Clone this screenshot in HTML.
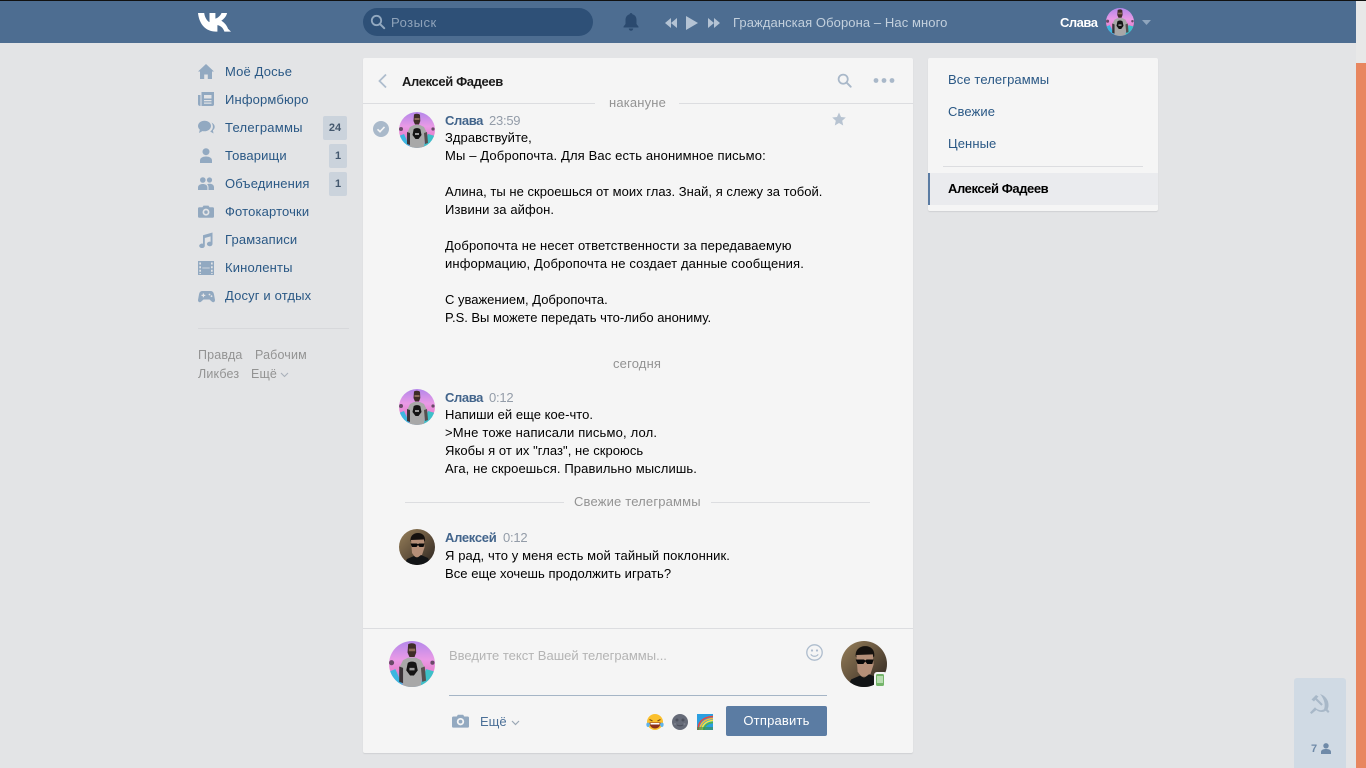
<!DOCTYPE html>
<html lang="ru"><head><meta charset="utf-8"><title>Телеграммы</title>
<style>
html,body{margin:0;padding:0;width:1366px;height:768px;overflow:hidden;background:#e3e4e6;}
body{font-family:"Liberation Sans",sans-serif;font-size:13px;position:relative;color:#000;}
.a{position:absolute;white-space:nowrap;}
.n{color:#2a5885;left:225px;letter-spacing:.15px;line-height:16px;}
.ic{position:absolute;left:198px;}
.b{position:absolute;background:#cbd3dc;border-radius:2px;color:#44586e;font-weight:bold;font-size:11px;text-align:center;height:24px;line-height:24px;}
.t{left:445px;line-height:18px;color:#000;letter-spacing:.05px;}
.nm{left:445px;font-weight:bold;color:#42648b;line-height:16px;letter-spacing:-.38px;}
.tm{color:#939ca8;line-height:16px;letter-spacing:-.25px;}
.g{color:#939393;line-height:16px;letter-spacing:.17px;}
.r{left:948px;color:#2a5885;line-height:16px;letter-spacing:.1px;}
svg{position:absolute;display:block;}
</style></head><body>
<svg width="0" height="0" style="position:absolute"><defs>
<clipPath id="c"><circle cx="18" cy="18" r="18"/></clipPath>
<linearGradient id="sky" x1="0" y1="0" x2="0" y2="1"><stop offset="0" stop-color="#b487ea"/><stop offset=".4" stop-color="#e99ae6"/><stop offset=".65" stop-color="#e884d0"/><stop offset="1" stop-color="#5a9fd8"/></linearGradient>
<linearGradient id="bg2" x1="0" y1="0" x2="1" y2="1"><stop offset="0" stop-color="#97805a"/><stop offset=".55" stop-color="#5f4e3a"/><stop offset="1" stop-color="#2a2420"/></linearGradient>
<symbol id="sl" viewBox="0 0 36 36"><g clip-path="url(#c)"><rect width="36" height="36" fill="url(#sky)"/><path d="M0 24l5-2 6 14H0z" fill="#3cb6e0"/><path d="M36 24l-7-2-5 14h12z" fill="#3cc0c8"/><circle cx="2" cy="17" r="2" fill="#6a4a68"/><circle cx="34" cy="17" r="1.600" fill="#6a4a68"/><path d="M11 15l4-2h6l4 2 3 6-2 2-1 13H11l-1-13-2-2z" fill="#a8a8a8"/><path d="M8 20l3 1v12l-3-1z" fill="#3a3438"/><path d="M25 21l3-1 1 11-3 1z" fill="#55504f"/><path d="M15 2.500c2-1 5-1 6 .5l.3 6-1.300 3.500h-4L14.500 9z" fill="#3e2c28"/><path d="M15.500 6h5v2h-5z" fill="#8a6a58"/><path d="M14.500 18c0-2.500 7-2.500 7 0l1 5-3 4h-3l-3-4z" fill="#141414"/><path d="M16 21h4v2h-4z" fill="#9a9a9a"/></g></symbol>
<symbol id="al" viewBox="0 0 36 36"><g clip-path="url(#c)"><rect width="36" height="36" fill="url(#bg2)"/><path d="M11.500 12c-.5-5 3-8 7.500-8s7.500 3 7 8l-1.500 1-12 .5z" fill="#15110e"/><path d="M12 11l13-.5.5 8-2.500 7.500-3 2h-4l-3-4z" fill="#b58f78"/><path d="M11.500 14.500h6.500l1 .8 1-.8h5.500l-1 3.500h-4l-1.500-2-1.500 2h-4.500z" fill="#080808"/><path d="M5 36l3-6 7-3 3 2 4-3 7 3 3 7z" fill="#121416"/></g></symbol>
<symbol id="cam" viewBox="0 0 18 14"><path d="M1.500 2.200H5L6.200.4h5.600L13 2.200h3.500A1.500 1.500 0 0 1 18 3.700v8.800a1.500 1.500 0 0 1-1.500 1.500h-15A1.500 1.500 0 0 1 0 12.500V3.700a1.500 1.500 0 0 1 1.500-1.500zM9 3.800a3.900 3.900 0 1 0 0 7.800 3.900 3.900 0 0 0 0-7.800zm0 1.900a2 2 0 1 1 0 4 2 2 0 0 1 0-4z" fill="#93a9c0" fill-rule="evenodd"/></symbol>
</defs></svg>

<!-- top bar -->
<div class="a" style="left:0;top:0;width:1366px;height:1px;background:#111;"></div>
<div class="a" style="left:0;top:1px;width:1356px;height:42px;background:#4d6d91;"></div>
<svg style="left:198px;top:12px" width="33" height="20" viewBox="0 0 33 20"><path d="M0 1h6.200c.4 3.600 2.600 8.200 5.300 9.100V1h5.900v5.600C19.400 6.300 22.300 4 23.500 1h5.600c-.9 3.700-3.700 6.300-5.800 7.800 2.300 1.300 5.300 3.900 6.700 8L33 19.600h-6.600c-1.100-3.500-3.700-6-7-6.500v6.500h-1.500C8 19.600 1.200 12.500 0 1z" fill="#fff"/></svg>
<div class="a" style="left:363px;top:8px;width:230px;height:28px;border-radius:14px;background:#2e5077;"></div>
<svg style="left:370px;top:14px" width="16" height="16" viewBox="0 0 16 16"><circle cx="6.500" cy="6.500" r="4.700" fill="none" stroke="#93a9c0" stroke-width="1.800"/><path d="M10 10l4.200 4.200" stroke="#93a9c0" stroke-width="2" stroke-linecap="round"/></svg>
<div class="a" style="left:391px;top:15px;color:#8fa3ba;line-height:16px;letter-spacing:.5px;">Розыск</div>
<svg style="left:622px;top:12px" width="18" height="20" viewBox="0 0 18 20"><path d="M9 1c.8 0 1.300.5 1.400 1.200C13.200 3 14.500 5.200 14.500 8v4l2 2.600v.9h-15v-.9l2-2.600V8c0-2.800 1.300-5 4.100-5.800C7.700 1.500 8.200 1 9 1zM6.800 16.500h4.400C11 18 10.200 18.800 9 18.800S7 18 6.800 16.500z" fill="#2b4a6f"/></svg>
<svg style="left:664px;top:16px" width="14" height="14" viewBox="0 0 14 14"><path d="M7 2v10L1 7zM13 2v10L7 7z" fill="#b4c3d4"/></svg>
<svg style="left:685px;top:15px" width="14" height="16" viewBox="0 0 14 16"><path d="M1 1l12 7-12 7z" fill="#b4c3d4"/></svg>
<svg style="left:707px;top:16px" width="14" height="14" viewBox="0 0 14 14"><path d="M1 2l6 5-6 5zM7 2l6 5-6 5z" fill="#b4c3d4"/></svg>
<div class="a" style="left:733px;top:15px;color:#c3d0dd;line-height:16px;letter-spacing:.09px;">Гражданская Оборона – Нас много</div>
<div class="a" style="left:1060px;top:15px;color:#fff;font-weight:bold;line-height:16px;letter-spacing:-.5px;">Слава</div>
<svg style="left:1106px;top:8px" width="28" height="28"><use href="#sl" width="28" height="28"/></svg>
<svg style="left:1142px;top:20px" width="9" height="5" viewBox="0 0 9 5"><path d="M0 0h9L4.500 5z" fill="#8fa5bd"/></svg>

<!-- scrollbar -->
<div class="a" style="left:1356px;top:1px;width:10px;height:62px;background:#e8e8e8;"></div>
<div class="a" style="left:1356px;top:63px;width:10px;height:705px;background:#e8865f;"></div>

<!-- left nav -->
<svg class="ic" style="top:64px" width="16" height="15" viewBox="0 0 16 15"><path d="M8 0l8 7.500h-2V15H9.800v-4.500H6.200V15H2V7.500H0z" fill="#92a9c1"/></svg>
<svg class="ic" style="top:92px" width="16" height="14" viewBox="0 0 16 14"><path d="M0 3h2.500v11C1 14 0 13.200 0 12zM3.500 0H16v12.500c0 .8-.7 1.500-1.500 1.500h-11zm2.500 3v3.500h7.500V3zm0 5v1.200h7.500V8zm0 2.500v1.200h7.500v-1.200z" fill="#92a9c1" fill-rule="evenodd"/></svg>
<svg class="ic" style="top:120px" width="17" height="15" viewBox="0 0 17 15"><ellipse cx="6.500" cy="6" rx="6.500" ry="5.300" fill="#92a9c1"/><path d="M2 9L1 13l4.500-2.500z" fill="#92a9c1"/><path d="M13.500 2.500c2 1 3.200 2.500 3.200 4.300 0 1.400-.7 2.600-1.800 3.500l.6 3.200-3.300-2c1.500-1 2.700-2.500 2.700-4.600 0-1.700-.5-3-1.400-4.400z" fill="#92a9c1"/></svg>
<svg class="ic" style="top:148px" width="16" height="15" viewBox="0 0 16 15"><circle cx="8" cy="3.700" r="3.500" fill="#92a9c1"/><path d="M2 15v-2.500C2 10 4.500 8.500 8 8.500s6 1.500 6 4V15z" fill="#92a9c1"/></svg>
<svg class="ic" style="top:177px" width="16" height="13" viewBox="0 0 16 13"><circle cx="4.800" cy="3" r="2.800" fill="#92a9c1"/><circle cx="11.500" cy="3" r="2.600" fill="#92a9c1"/><path d="M0 13v-2.500C0 8.200 2.200 7 4.800 7s4.600 1.200 4.600 3.500V13zM10.500 13v-2.500c0-1.500-.5-2.600-1.400-3.300.7-.3 1.500-.4 2.400-.4 2.500 0 4.500 1.200 4.500 3.500V13z" fill="#92a9c1"/></svg>
<svg style="left:198px;top:205px" width="16" height="13"><use href="#cam" width="16" height="13"/></svg>
<svg class="ic" style="top:232px" width="16" height="16" viewBox="0 0 16 16"><path d="M5 3.300L14.500.5V12a2.800 2.300 0 1 1-1.900-2.200V4.400L6.800 6v7.800a2.800 2.300 0 1 1-1.800-2.100z" fill="#92a9c1"/></svg>
<svg class="ic" style="top:261px" width="16" height="14" viewBox="0 0 16 14"><path d="M0 0h16v14H0zM1.300 1.500v2h1.700v-2zm0 3.700v2h1.700v-2zm0 3.600v2h1.700v-2zm0 3.500v.7h1.700V12zM13 1.500v2h1.700v-2zm0 3.700v2h1.700v-2zm0 3.600v2h1.700v-2zm0 3.500v.7h1.700V12zM4.300 6.600v.8h7.400v-.8z" fill="#92a9c1" fill-rule="evenodd"/></svg>
<svg class="ic" style="top:290px" width="17" height="13" viewBox="0 0 17 13"><path d="M4.500 1h8c2 0 3 1 3.500 3.500l1 5.500c.2 1.700-1.500 3-3 1.800L11.500 9.500h-6L3 11.800C1.500 13 -.2 11.700 0 10l1-5.500C1.500 2 2.500 1 4.500 1z" fill="#92a9c1"/><path d="M4.800 3.500v1.300H3.500V6h1.300v1.300H6V6h1.300V4.800H6V3.500z" fill="#e3e4e6"/><circle cx="11.500" cy="4.500" r=".9" fill="#e3e4e6"/><circle cx="13.500" cy="6.200" r=".9" fill="#e3e4e6"/></svg>

<div class="a n" style="top:64px">Моё Досье</div>
<div class="a n" style="top:92px">Информбюро</div>
<div class="a n" style="top:120px;letter-spacing:.25px">Телеграммы</div>
<div class="a n" style="top:148px">Товарищи</div>
<div class="a n" style="top:176px">Объединения</div>
<div class="a n" style="top:204px">Фотокарточки</div>
<div class="a n" style="top:232px">Грамзаписи</div>
<div class="a n" style="top:260px">Киноленты</div>
<div class="a n" style="top:288px">Досуг и отдых</div>
<div class="b" style="left:323px;top:116px;width:24px;">24</div>
<div class="b" style="left:329px;top:144px;width:18px;">1</div>
<div class="b" style="left:329px;top:172px;width:18px;">1</div>
<div class="a" style="left:198px;top:328px;width:151px;height:1px;background:#d7d8db;"></div>
<div class="a" style="left:198px;top:347px;color:#939393;line-height:16px;font-size:12.5px;letter-spacing:.15px;">Правда</div>
<div class="a" style="left:255px;top:347px;color:#939393;line-height:16px;font-size:12.5px;letter-spacing:.15px;">Рабочим</div>
<div class="a" style="left:198px;top:366px;color:#939393;line-height:16px;font-size:12.5px;letter-spacing:.15px;">Ликбез</div>
<div class="a" style="left:251px;top:366px;color:#939393;line-height:16px;font-size:12.5px;letter-spacing:.15px;">Ещё</div>
<svg style="left:280px;top:372px" width="9" height="6" viewBox="0 0 9 6"><path d="M1 1l3.500 3.500L8 1" fill="none" stroke="#a9b0b9" stroke-width="1.100"/></svg>

<!-- main card -->
<div class="a" style="left:363px;top:58px;width:550px;height:695px;background:#f5f5f5;border-radius:2px;box-shadow:0 1px 1px #cfd0d3;"></div>
<svg style="left:377px;top:73px" width="11" height="16" viewBox="0 0 11 16"><path d="M9 1.500L2.500 8 9 14.500" fill="none" stroke="#aebdcd" stroke-width="1.800"/></svg>
<div class="a" style="left:402px;top:74px;font-weight:bold;line-height:16px;color:#1a1a1a;letter-spacing:-.38px;">Алексей Фадеев</div>
<svg style="left:837px;top:73px" width="15" height="15" viewBox="0 0 17 17"><circle cx="7" cy="7" r="5.200" fill="none" stroke="#a9b8c9" stroke-width="2"/><path d="M11 11l4.500 4.500" stroke="#a9b8c9" stroke-width="2.200" stroke-linecap="round"/></svg>
<svg style="left:872px;top:77px" width="24" height="7" viewBox="0 0 24 7"><circle cx="4" cy="3.500" r="2.400" fill="#a9b8c9"/><circle cx="12" cy="3.500" r="2.400" fill="#a9b8c9"/><circle cx="20" cy="3.500" r="2.400" fill="#a9b8c9"/></svg>
<div class="a" style="left:363px;top:103px;width:550px;height:1px;background:#dcdde0;"></div>
<div class="a" style="left:595px;top:95px;width:84px;height:16px;background:#f5f5f5;"></div>
<div class="a g" style="left:609px;top:95px;">накануне</div>

<svg style="left:373px;top:121px" width="16" height="16" viewBox="0 0 16 16"><circle cx="8" cy="8" r="8" fill="#a9b9ca"/><path d="M4.500 8.300l2.500 2.400 4.500-4.800" fill="none" stroke="#f5f5f5" stroke-width="1.600"/></svg>
<svg style="left:399px;top:112px" width="36" height="36"><use href="#sl" width="36" height="36"/></svg>
<div class="a nm" style="top:113px">Слава</div>
<div class="a tm" style="left:489px;top:113px">23:59</div>
<svg style="left:832px;top:112px" width="14" height="14" viewBox="0 0 14 14"><path d="M7 .5l2 4.500 4.800.5-3.600 3.200 1 4.800L7 11l-4.200 2.500 1-4.800L.2 5.500 5 5z" fill="#b7c3d1"/></svg>
<div class="a t" style="top:129px">Здравствуйте,<br><span style="letter-spacing:.135px">Мы – Добропочта. Для Вас есть анонимное письмо:</span><br><br><span style="letter-spacing:.03px">Алина, ты не скроешься от моих глаз. Знай, я слежу за тобой.</span><br><span style="letter-spacing:.1px">Извини за айфон.</span><br><br><span style="letter-spacing:.11px">Добропочта не несет ответственности за передаваемую</span><br><span style="letter-spacing:.13px">информацию, Добропочта не создает данные сообщения.</span><br><br><span style="letter-spacing:0">С уважением, Добропочта.</span><br><span style="letter-spacing:-.02px">P.S. Вы можете передать что-либо анониму.</span></div>

<div class="a g" style="left:613px;top:356px;">сегодня</div>

<svg style="left:399px;top:389px" width="36" height="36"><use href="#sl" width="36" height="36"/></svg>
<div class="a nm" style="top:390px">Слава</div>
<div class="a tm" style="left:489px;top:390px">0:12</div>
<div class="a t" style="top:406px">Напиши ей еще кое-что.<br><span style="letter-spacing:.18px">&gt;Мне тоже написали письмо, лол.</span><br>Якобы я от их "глаз", не скроюсь<br><span style="letter-spacing:.1px">Ага, не скроешься. Правильно мыслишь.</span></div>

<div class="a" style="left:405px;top:502px;width:159px;height:1px;background:#dcdde0;"></div>
<div class="a" style="left:711px;top:502px;width:159px;height:1px;background:#dcdde0;"></div>
<div class="a g" style="left:574px;top:494px;">Свежие телеграммы</div>

<svg style="left:399px;top:529px" width="36" height="36"><use href="#al" width="36" height="36"/></svg>
<div class="a nm" style="top:530px;letter-spacing:-.3px">Алексей</div>
<div class="a tm" style="left:503px;top:530px">0:12</div>
<div class="a t" style="top:547px"><span style="letter-spacing:.1px">Я рад, что у меня есть мой тайный поклонник.</span><br>Все еще хочешь продолжить играть?</div>

<!-- composer -->
<div class="a" style="left:363px;top:628px;width:550px;height:1px;background:#dcdde0;"></div>
<svg style="left:389px;top:641px" width="46" height="46"><use href="#sl" width="46" height="46"/></svg>
<div class="a" style="left:449px;top:648px;color:#b4b4b4;line-height:16px;letter-spacing:0;">Введите текст Вашей телеграммы...</div>
<svg style="left:806px;top:644px" width="17" height="17" viewBox="0 0 17 17"><circle cx="8.500" cy="8.500" r="7.700" fill="none" stroke="#adbccd" stroke-width="1.300"/><circle cx="6" cy="6.500" r="1.100" fill="#adbccd"/><circle cx="11" cy="6.500" r="1.100" fill="#adbccd"/><path d="M4.800 10.300c1.700 2.600 5.700 2.600 7.400 0" fill="none" stroke="#adbccd" stroke-width="1.200"/></svg>
<svg style="left:841px;top:641px" width="46" height="46"><use href="#al" width="46" height="46"/></svg>
<div class="a" style="left:874px;top:672px;width:13px;height:16px;background:#f5f5f5;border-radius:3px;"></div>
<div class="a" style="left:876px;top:674px;width:8px;height:12px;background:#75b56b;border-radius:1.500px;"></div>
<div class="a" style="left:877px;top:676px;width:6px;height:7px;background:#b8dcb0;"></div>
<div class="a" style="left:449px;top:695px;width:378px;height:1px;background:#a5b5c6;"></div>
<svg style="left:452px;top:714px" width="17" height="14"><use href="#cam" width="17" height="14"/></svg>
<div class="a" style="left:480px;top:714px;color:#4a6f97;line-height:16px;">Ещё</div>
<svg style="left:511px;top:720px" width="9" height="6" viewBox="0 0 9 6"><path d="M1 1l3.500 3.500L8 1" fill="none" stroke="#9aa7b5" stroke-width="1.200"/></svg>
<svg style="left:646px;top:713px" width="18" height="18" viewBox="0 0 18 18"><circle cx="9" cy="9" r="8" fill="#fbc02d"/><path d="M3.500 6.500l3 1.500M14.500 6.500l-3 1.500" stroke="#7a4a10" stroke-width="1.200"/><path d="M3.500 9.500h11c0 4-2.500 6-5.500 6s-5.500-2-5.500-6z" fill="#8c2f1a"/><path d="M4.500 10h9v1.500h-9z" fill="#fff"/><path d="M.8 10c1-.8 2.500-.5 3 1 .4 1.400-.7 3-2 3S-.2 11.500.8 10zM17.200 10c-1-.8-2.500-.5-3 1-.4 1.400.7 3 2 3s1.900-2.500 1-4z" fill="#5fb4ec"/></svg>
<svg style="left:672px;top:714px" width="16" height="16" viewBox="0 0 16 16"><circle cx="8" cy="8" r="8" fill="#666b78"/><circle cx="5" cy="6" r="1.500" fill="#4e525e"/><circle cx="11" cy="6" r="1.500" fill="#4e525e"/><path d="M5 11c2 1 4 1 6 0" stroke="#4e525e" stroke-width="1.200" fill="none"/><circle cx="3" cy="10" r="1" fill="#7d818d"/><circle cx="12.500" cy="10" r="1" fill="#7d818d"/></svg>
<svg style="left:697px;top:714px" width="16" height="16" viewBox="0 0 16 16"><rect width="16" height="16" fill="#2b9fe0"/><path d="M1 16C1 8 6 3 16 2.500" fill="none" stroke="#e8483c" stroke-width="1.600"/><path d="M3 16C3 9.500 7.500 5 16 4.500" fill="none" stroke="#f6b73c" stroke-width="1.600"/><path d="M5 16C5 11 9 7 16 6.500" fill="none" stroke="#f6e83c" stroke-width="1.600"/><path d="M7 16C7 12 10.500 9 16 8.500" fill="none" stroke="#4cb050" stroke-width="1.600"/><rect x="0" y="13" width="16" height="3" fill="#3d8f4a" opacity=".6"/></svg>
<div class="a" style="left:726px;top:706px;width:101px;height:30px;background:#5b7ca3;border-radius:2px;color:#fff;text-align:center;line-height:30px;letter-spacing:.2px;">Отправить</div>

<!-- right card -->
<div class="a" style="left:928px;top:58px;width:230px;height:153px;background:#f5f5f5;border-radius:2px;box-shadow:0 1px 1px #cfd0d3;"></div>
<div class="a r" style="top:72px">Все телеграммы</div>
<div class="a r" style="top:104px">Свежие</div>
<div class="a r" style="top:136px">Ценные</div>
<div class="a" style="left:943px;top:166px;width:200px;height:1px;background:#dcdde0;"></div>
<div class="a" style="left:928px;top:173px;width:230px;height:32px;background:#eaebee;"></div>
<div class="a" style="left:928px;top:173px;width:2px;height:32px;background:#5b7ca3;"></div>
<div class="a" style="left:948px;top:181px;font-weight:bold;line-height:16px;color:#000;letter-spacing:-.42px;">Алексей Фадеев</div>

<!-- bottom right widget -->
<div class="a" style="left:1294px;top:678px;width:52px;height:90px;background:#d0dae4;border-radius:3px 3px 0 0;"></div>
<svg style="left:1309px;top:693px" width="22" height="22" viewBox="0 0 22 22"><path d="M11 1c5 1.500 9 6 8.500 12-.1 1.200-.5 2.400-1 3.300l2 2.200-1.500 1.500-2.200-2.200c-3 2-6.700 1.500-9.500-.8L2.500 21 1 19.500l5-5.200.9 1c2.400 2.100 5.600 2.500 8.100 1 1.600-3.900.6-10-4-15.300z" fill="#a8b8c8"/><path d="M2.500 6.500L7 2l2.500 1.500-1.700 1.700 6 6-1.500 1.500-6-6L5 8.500z" fill="#a8b8c8"/></svg>
<div class="a" style="left:1311px;top:741px;color:#6f8aa8;font-weight:bold;font-size:11px;line-height:16px;">7</div>
<svg style="left:1321px;top:743px" width="10" height="11" viewBox="0 0 10 11"><circle cx="5" cy="2.800" r="2.700" fill="#6f8aa8"/><path d="M0 11V9c0-2 2-3 5-3s5 1 5 3v2z" fill="#6f8aa8"/></svg>
</body></html>
